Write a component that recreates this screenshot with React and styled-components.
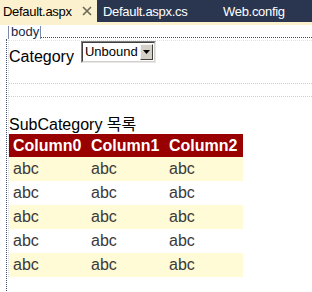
import React from "react";
import styled, { createGlobalStyle } from "styled-components";

const Global = createGlobalStyle`
  html, body { margin: 0; padding: 0; background: #ffffff; }
  body { font-family: "Liberation Sans", Arial, "Noto Sans CJK KR", sans-serif; }
`;

const Page = styled.div`
  width: 312px;
  height: 292px;
  overflow: hidden;
  background: #ffffff;
`;

const TabBar = styled.div`
  display: flex;
  height: 22px;
  background: #2a3550;
`;

const Tab = styled.div`
  display: flex;
  align-items: center;
  box-sizing: border-box;
  width: ${(p) => p.$w}px;
  padding-left: ${(p) => (p.$active ? 3 : 6)}px;
  background: ${(p) => (p.$active ? "#fcf1cf" : "transparent")};
  color: ${(p) => (p.$active ? "#000000" : "#ffffff")};
  font-size: 13px;
  letter-spacing: -0.3px;
  white-space: nowrap;
`;

const Close = styled.svg`
  margin-left: 10px;
  flex: none;
`;

const Strip = styled.div`
  height: 3px;
  background: #fcf1cf;
`;

const TagRow = styled.div`
  display: flex;
  align-items: flex-end;
  height: 14px;
  padding-left: 8px;
`;

const Tag = styled.div`
  height: 13px;
  line-height: 12px;
  padding: 0 1px 0 2px;
  border-left: 1px solid #7b8aa6;
  border-right: 1px solid #7b8aa6;
  color: #1c2947;
  font-size: 13px;
`;

const Rule = styled.div`
  flex: 1;
  height: 1px;
  margin-bottom: 1px;
  border-bottom: 1px dotted #3d4b70;
`;

const Surface = styled.div`
  margin-left: 6px;
  padding-top: 1px;
  height: 253px;
  border-left: 1px dotted #3d4b70;
`;

const Form = styled.div`
  margin-left: 1px;
  border-left: 1px dotted #d6d6d6;
  border-top: 1px dotted #e2e2e2;
`;

const CategoryRow = styled.div`
  display: flex;
  align-items: flex-end;
  height: 22px;
`;

const Label = styled.span`
  font-size: 16px;
  line-height: 16px;
  margin-bottom: -2px;
  color: #000000;
`;

const Select = styled.div`
  display: flex;
  align-items: stretch;
  box-sizing: border-box;
  width: 75px;
  height: 22px;
  margin-left: 7px;
  border-top: 1px solid #808080;
  border-left: 1px solid #808080;
  border-right: 1px solid #e8e8e8;
  border-bottom: 1px solid #e8e8e8;
`;

const SelectInner = styled.div`
  display: flex;
  flex: 1;
  align-items: stretch;
  border-top: 1px solid #404040;
  border-left: 1px solid #404040;
  border-right: 1px solid #d4d0c8;
  border-bottom: 1px solid #d4d0c8;
  background: #ffffff;
`;

const SelectText = styled.span`
  flex: 1;
  padding-left: 2px;
  font-size: 13px;
  line-height: 18px;
  color: #000000;
`;

const SelectButton = styled.div`
  display: flex;
  align-items: center;
  justify-content: center;
  width: 13px;
  margin: 1px;
  box-sizing: border-box;
  background: #d4d0c8;
  border-top: 1px solid #f4f4f4;
  border-left: 1px solid #f4f4f4;
  border-right: 1px solid #404040;
  border-bottom: 1px solid #404040;
`;

const EmptyPara = styled.div`
  margin-top: 20px;
  height: 12px;
  border-top: 1px dotted #cfcfcf;
  border-bottom: 1px dotted #cfcfcf;
`;

const SubLabel = styled.div`
  margin-top: 19px;
  font-size: 16px;
  line-height: 18px;
  color: #000000;
  white-space: nowrap;
`;

const Grid = styled.table`
  border-collapse: collapse;
  width: 234px;
  table-layout: fixed;
  font-size: 16px;
`;

const HeadCell = styled.th`
  height: 23px;
  padding: 0 0 0 4px;
  text-align: left;
  background: #990000;
  color: #ffffff;
  font-weight: bold;
  white-space: nowrap;
`;

const Row = styled.tr`
  background: ${(p) => (p.$alt ? "#fffbd6" : "#ffffff")};
`;

const Cell = styled.td`
  height: 24px;
  padding: 0 0 0 4px;
  color: #3a3a3a;
`;

const rows = [0, 1, 2, 3, 4];

export default function App() {
  return (
    <Page>
      <Global />
      <TabBar>
        <Tab $active $w={97}>
          Default.aspx
          <Close width="10" height="10" viewBox="0 0 10 10">
            <path d="M1 1 L9 9 M9 1 L1 9" stroke="#6e6a58" strokeWidth="1.7" fill="none" />
          </Close>
        </Tab>
        <Tab $w={120}>Default.aspx.cs</Tab>
        <Tab $w={95}>Web.config</Tab>
      </TabBar>
      <Strip />
      <TagRow>
        <Tag>body</Tag>
        <Rule />
      </TagRow>
      <Surface>
        <Form>
          <CategoryRow>
            <Label>Category</Label>
            <Select>
              <SelectInner>
                <SelectText>Unbound</SelectText>
                <SelectButton>
                  <svg width="7" height="4" viewBox="0 0 7 4">
                    <path d="M0 0 H7 L3.5 4 Z" fill="#000000" />
                  </svg>
                </SelectButton>
              </SelectInner>
            </Select>
          </CategoryRow>
          <EmptyPara />
          <SubLabel>SubCategory 목록</SubLabel>
          <Grid>
            <thead>
              <tr>
                <HeadCell>Column0</HeadCell>
                <HeadCell>Column1</HeadCell>
                <HeadCell>Column2</HeadCell>
              </tr>
            </thead>
            <tbody>
              {rows.map((r) => (
                <Row key={r} $alt={r % 2 === 0}>
                  <Cell>abc</Cell>
                  <Cell>abc</Cell>
                  <Cell>abc</Cell>
                </Row>
              ))}
            </tbody>
          </Grid>
        </Form>
      </Surface>
    </Page>
  );
}
